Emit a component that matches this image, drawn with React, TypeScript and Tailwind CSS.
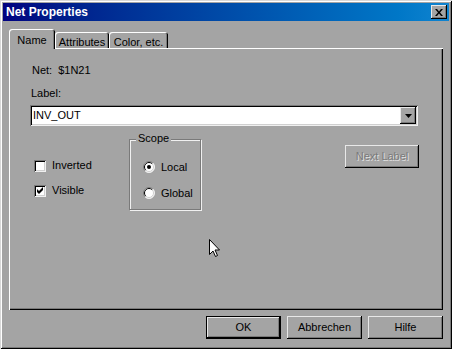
const font = "font-['Liberation_Sans',Arial,sans-serif]";

function Radio({ checked, label }: { checked?: boolean; label: string }) {
  return (
    <div className="flex items-center h-[12px]">
      <svg width="12" height="12" viewBox="0 0 12 12" className="shrink-0">
        <circle cx="6" cy="6" r="5.5" fill="#fff" />
        <path d="M9.9 2.1 A5.5 5.5 0 0 0 2.1 9.9" stroke="#7a7a7a" fill="none" />
        <path d="M2.1 9.9 A5.5 5.5 0 0 0 9.9 2.1" stroke="#f0f0f0" fill="none" />
        <path d="M9.2 2.8 A4.5 4.5 0 0 0 2.8 9.2" stroke="#000" fill="none" />
        <path d="M2.8 9.2 A4.5 4.5 0 0 0 9.2 2.8" stroke="#d0d0d0" fill="none" />
        {checked && <circle cx="6" cy="6" r="2" fill="#000" />}
      </svg>
      <span className="ml-[6px]">{label}</span>
    </div>
  );
}

function Checkbox({ checked, label }: { checked?: boolean; label: string }) {
  return (
    <div className="flex items-center h-[13px]">
      <div className="w-[12px] h-[12px] shrink-0 bg-white flex items-center justify-center shadow-[inset_1px_1px_0_#7a7a7a,inset_-1px_-1px_0_#f0f0f0,inset_2px_2px_0_#000,inset_-2px_-2px_0_#d0d0d0]">
        {checked && (
          <svg width="7" height="7" viewBox="0 0 7 7">
            <path d="M0 2 L2 4 L6 0 L6 3 L2 7 L0 5 Z" fill="#000" />
          </svg>
        )}
      </div>
      <span className="ml-[6px]">{label}</span>
    </div>
  );
}

export default function App() {
  return (
    <div
      className={`${font} relative w-[452px] h-[349px] bg-[#a4a4a4] p-[3px] flex flex-col text-[11px] text-black shadow-[inset_1px_1px_0_#d8d8d8,inset_-1px_-1px_0_#000,inset_2px_2px_0_#fff,inset_-2px_-2px_0_#7a7a7a]`}
    >
      {/* Title bar */}
      <div className="h-[18px] flex items-center pl-[3px] pr-[2px] bg-gradient-to-r from-[#000080] to-[#1084d0]">
        <span className="text-white font-bold text-[12px] leading-none">Net Properties</span>
        <div className="ml-auto w-[16px] h-[14px] bg-[#a4a4a4] flex items-center justify-center shadow-[inset_-1px_-1px_0_#000,inset_1px_1px_0_#e8e8e8,inset_-2px_-2px_0_#7a7a7a]">
          <svg width="8" height="7" viewBox="0 0 8 7">
            <path d="M0 0 L2 0 L4 2.5 L6 0 L8 0 L5 3.5 L8 7 L6 7 L4 4.5 L2 7 L0 7 L3 3.5 Z" fill="#000" />
          </svg>
        </div>
      </div>

      <div className="px-[6px] flex flex-col">
        {/* Tabs */}
        <div className="mt-[8px] h-[19px] flex items-end">
          <div className="relative z-10 -mb-[1px] w-[46px] h-[20px] bg-[#a4a4a4] rounded-t-[3px] flex justify-center pt-[3px] shadow-[inset_1px_1px_0_#fff,inset_-1px_0_0_#000,inset_-2px_0_0_#7a7a7a]">
            Name
          </div>
          <div className="w-[54px] h-[16px] rounded-t-[3px] flex justify-center pt-[2px] shadow-[inset_1px_1px_0_#fff,inset_-1px_0_0_#000,inset_-2px_0_0_#7a7a7a]">
            Attributes
          </div>
          <div className="w-[59px] h-[16px] rounded-t-[3px] flex justify-center pt-[2px] shadow-[inset_1px_1px_0_#fff,inset_-1px_0_0_#000,inset_-2px_0_0_#7a7a7a]">
            Color, etc.
          </div>
        </div>

        {/* Panel */}
        <div className="h-[262px] pl-[21px] pr-[24px] pt-[16px] flex flex-col shadow-[inset_1px_1px_0_#fff,inset_-1px_-1px_0_#000,inset_-2px_-2px_0_#7a7a7a]">
          <div className="ml-[2px] h-[13px] leading-[13px] flex">
            <span>Net:</span>
            <span className="ml-[6px]">$1N21</span>
          </div>
          <div className="ml-[1px] mt-[10px] h-[13px] leading-[13px]">Label:</div>

          {/* Combo box */}
          <div className="mt-[5px] w-[388px] h-[21px] bg-white flex items-center pl-[3px] pr-[2px] shadow-[inset_1px_1px_0_#7a7a7a,inset_-1px_-1px_0_#f0f0f0,inset_2px_2px_0_#000,inset_-2px_-2px_0_#d0d0d0]">
            <span className="leading-none">INV_OUT</span>
            <div className="ml-auto w-[16px] h-[17px] bg-[#a4a4a4] flex items-center justify-center shadow-[inset_-1px_-1px_0_#000,inset_1px_1px_0_#e8e8e8,inset_-2px_-2px_0_#7a7a7a]">
              <svg width="7" height="4" viewBox="0 0 7 4">
                <path d="M0 0 H7 L3.5 4 Z" fill="#000" />
              </svg>
            </div>
          </div>

          {/* Lower section */}
          <div className="mt-[13px] flex items-start">
            <div className="ml-[4px] w-[95px] pt-[20px] flex flex-col gap-[12px]">
              <Checkbox label="Inverted" />
              <Checkbox checked label="Visible" />
            </div>

            <div className="relative w-[72px] h-[71px] border border-[#7a7a7a] shadow-[1px_1px_0_#f0f0f0,inset_1px_1px_0_#f0f0f0] pl-[13px] pt-[21px] flex flex-col gap-[14px]">
              <span className="absolute -top-[8px] left-[6px] px-[2px] bg-[#a4a4a4] leading-[13px]">Scope</span>
              <Radio checked label="Local" />
              <Radio label="Global" />
            </div>

            <div className="ml-auto mt-[6px] w-[74px] h-[23px] flex items-center justify-center text-[#7a7a7a] [text-shadow:1px_1px_0_#e0e0e0] shadow-[inset_-1px_-1px_0_#000,inset_1px_1px_0_#e8e8e8,inset_-2px_-2px_0_#7a7a7a]">
              Next Label
            </div>
          </div>
        </div>

        {/* Buttons */}
        <div className="mt-[6px] flex justify-end gap-[6px]">
          <div className="w-[75px] h-[23px] flex items-center justify-center border border-black shadow-[inset_-1px_-1px_0_#000,inset_1px_1px_0_#e8e8e8,inset_-2px_-2px_0_#7a7a7a]">
            OK
          </div>
          <div className="w-[75px] h-[23px] flex items-center justify-center shadow-[inset_-1px_-1px_0_#000,inset_1px_1px_0_#e8e8e8,inset_-2px_-2px_0_#7a7a7a]">
            Abbrechen
          </div>
          <div className="w-[75px] h-[23px] flex items-center justify-center shadow-[inset_-1px_-1px_0_#000,inset_1px_1px_0_#e8e8e8,inset_-2px_-2px_0_#7a7a7a]">
            Hilfe
          </div>
        </div>
      </div>

      {/* Mouse cursor */}
      <svg
        className="absolute left-[208px] top-[238px]"
        width="13"
        height="20"
        viewBox="0 0 13 20"
      >
        <path d="M1.5 1.5 L1.5 16.5 L5 13 L7.5 18.5 L9.5 17.5 L7 12 L11.5 12 Z" fill="#fff" stroke="#000" strokeWidth="1" />
      </svg>
    </div>
  );
}
